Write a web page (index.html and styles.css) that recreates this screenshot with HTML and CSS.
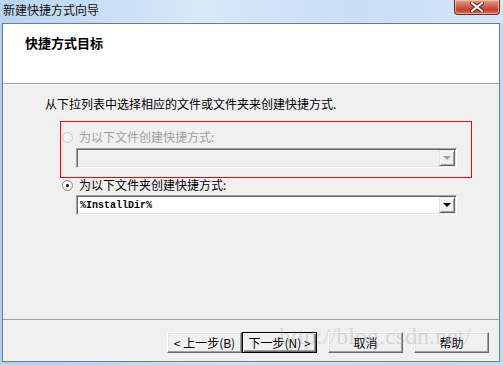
FILE: index.html
```html
<!DOCTYPE html>
<html lang="zh-CN">
<head>
  <meta charset="UTF-8" />
  <title>新建快捷方式向导</title>
  <link rel="stylesheet" href="styles.css">
</head>
<body>

  <div class="window">
    <!-- Title bar -->
    <div class="titlebar">
      <span class="title">新建快捷方式向导</span>
      <button class="close-btn" aria-label="关闭">
        <svg width="14" height="10" viewBox="0 0 14 10">
          <path d="M2 1 L12 9 M12 1 L2 9" stroke="#5a2a22" stroke-width="4" stroke-linecap="square"/>
          <path d="M2 1 L12 9 M12 1 L2 9" stroke="#ffffff" stroke-width="2" stroke-linecap="square"/>
        </svg>
      </button>
    </div>

    <div class="panel">
      <div class="header">
        <h1>快捷方式目标</h1>
      </div>

      <div class="content">
        <p class="intro">从下拉列表中选择相应的文件或文件夹来创建快捷方式.</p>

        <div class="option disabled">
          <span class="radio"></span>
          <span>为以下文件创建快捷方式:</span>
        </div>
        <div class="combo disabled">
          <span class="combo-text"></span>
          <span class="combo-arrow"><i></i></span>
        </div>

        <div class="option second">
          <span class="radio checked"></span>
          <span>为以下文件夹创建快捷方式:</span>
        </div>
        <div class="combo combo-second">
          <span class="combo-text">%InstallDir%</span>
          <span class="combo-arrow"><i></i></span>
        </div>

        <div class="highlight"></div>
      </div>

      <div class="footer">
        <button class="btn">&lt; 上一步(B)</button>
        <button class="btn default">下一步(N) &gt;</button>
        <button class="btn gap">取消</button>
        <button class="btn gap">帮助</button>
        <span class="watermark">http://blog.csdn.net/</span>
      </div>
    </div>
  </div>

</body>
</html>
```

FILE: styles.css
```css
body {
  margin: 0;
  padding: 0;
  width: 503px;
  height: 365px;
  overflow: hidden;
  font-family: "Noto Sans CJK SC", "Noto Sans", sans-serif;
  font-size: 12px;
  color: #000;
  background: linear-gradient(to right, #b4cfec, #cfe2f6 45%, #c4daf2);
}

.window {
  display: flex;
  flex-direction: column;
  height: 365px;
}

/* Title bar */
.titlebar {
  height: 23px;
  display: flex;
  justify-content: space-between;
  align-items: flex-start;
  background: linear-gradient(to right, #bad4ef, #d8e8f8 40%, #c9def4 70%, #d3e5f7);
}

.title {
  padding-left: 3px;
  line-height: 20px;
  font-size: 12px;
  color: #111;
}

.close-btn {
  width: 46px;
  height: 15px;
  margin-right: 3px;
  padding: 0;
  border: 1px solid #6a2c24;
  border-top: none;
  border-radius: 0 0 4px 4px;
  background: linear-gradient(to bottom, #e4a08f, #cc5a45 50%, #c0402e 70%, #d7705a);
  display: flex;
  align-items: center;
  justify-content: center;
  box-shadow: inset 0 0 0 1px rgba(255, 210, 200, 0.6);
}

/* Wizard panel */
.panel {
  margin: 0 3px 3px 2px;
  border: 1px solid #6d7c8d;
  background: #f0f0f0;
  flex: 1;
  display: flex;
  flex-direction: column;
}

.header {
  height: 59px;
  background: #fff;
  border-bottom: 1px solid #a0a0a0;
  box-shadow: 0 1px 0 #fff;
}

.header h1 {
  margin: 0;
  padding: 10px 0 0 22px;
  font-size: 13px;
  font-weight: bold;
  line-height: 18px;
}

.content {
  position: relative;
  flex: 1;
  padding: 13px 0 0 0;
}

.intro {
  margin: 0 0 0 42px;
  line-height: 14px;
}

.option {
  display: flex;
  align-items: center;
  gap: 6px;
  margin: 19px 0 0 59px;
  line-height: 14px;
  height: 14px;
}

.option.second {
  margin-top: 10px;
}

.option.disabled {
  color: #a0a0a0;
}

.radio {
  width: 11px;
  height: 11px;
  box-sizing: border-box;
  border-radius: 50%;
  border: 1px solid #8e8f8f;
  background: radial-gradient(circle at 40% 35%, #fff, #e6e6e6);
  position: relative;
}

.option.disabled .radio {
  border-color: #c8c8c8;
  background: #f4f4f4;
}

.radio.checked::after {
  content: "";
  position: absolute;
  left: 3px;
  top: 3px;
  width: 3px;
  height: 3px;
  border-radius: 50%;
  background: #000;
}

/* Combo boxes */
.combo {
  display: flex;
  align-items: center;
  justify-content: space-between;
  margin: 4px 0 0 73px;
  width: 381px;
  height: 20px;
  box-sizing: border-box;
  border: 1px solid;
  border-color: #a0a0a0 #fff #fff #a0a0a0;
  background: #fff;
  box-shadow: inset 1px 1px 0 #696969, inset -1px -1px 0 #e3e3e3;
}

.combo.disabled {
  background: #f0f0f0;
}

.combo-second {
  margin-top: 3px;
}

.combo-text {
  padding-left: 3px;
  font-family: "Liberation Mono", "DejaVu Sans Mono", monospace;
  font-size: 10px;
  font-weight: bold;
}

.combo-arrow {
  width: 16px;
  height: 16px;
  margin-right: 1px;
  box-sizing: border-box;
  background: #f0f0f0;
  border: 1px solid;
  border-color: #e3e3e3 #696969 #696969 #e3e3e3;
  box-shadow: inset 1px 1px 0 #fff, inset -1px -1px 0 #a0a0a0;
  display: flex;
  align-items: center;
  justify-content: center;
}

.combo-arrow i {
  width: 0;
  height: 0;
  border-left: 4px solid transparent;
  border-right: 4px solid transparent;
  border-top: 4px solid #000;
}

.combo.disabled .combo-arrow i {
  border-top-color: #a0a0a0;
}

/* red annotation frame */
.highlight {
  position: absolute;
  left: 57px;
  top: 37px;
  width: 412px;
  height: 57px;
  box-sizing: border-box;
  border: 1px solid #ff0000;
}

/* Footer */
.footer {
  position: relative;
  height: 42px;
  border-top: 1px solid #a0a0a0;
  display: flex;
  justify-content: flex-end;
  align-items: flex-start;
  padding: 12px 10px 0 0;
  box-sizing: border-box;
}

.btn {
  width: 75px;
  height: 21px;
  padding: 0;
  font-family: "Noto Sans CJK SC", "Noto Sans", sans-serif;
  font-size: 12px;
  color: #000;
  background: #f0f0f0;
  border: 1px solid;
  border-color: #fff #696969 #696969 #fff;
  box-shadow: inset -1px -1px 0 #a0a0a0, inset 1px 1px 0 #e3e3e3;
}

.btn.default {
  border: 1px solid #000;
  box-shadow: inset 1px 1px 0 #fff, inset -1px -1px 0 #696969, inset -2px -2px 0 #a0a0a0;
}

.btn.gap {
  margin-left: 11px;
}

.watermark {
  position: absolute;
  left: 276px;
  top: 3px;
  font-family: "Liberation Serif", serif;
  font-size: 24px;
  color: rgba(150, 150, 150, 0.3);
  pointer-events: none;
  white-space: nowrap;
}
```
